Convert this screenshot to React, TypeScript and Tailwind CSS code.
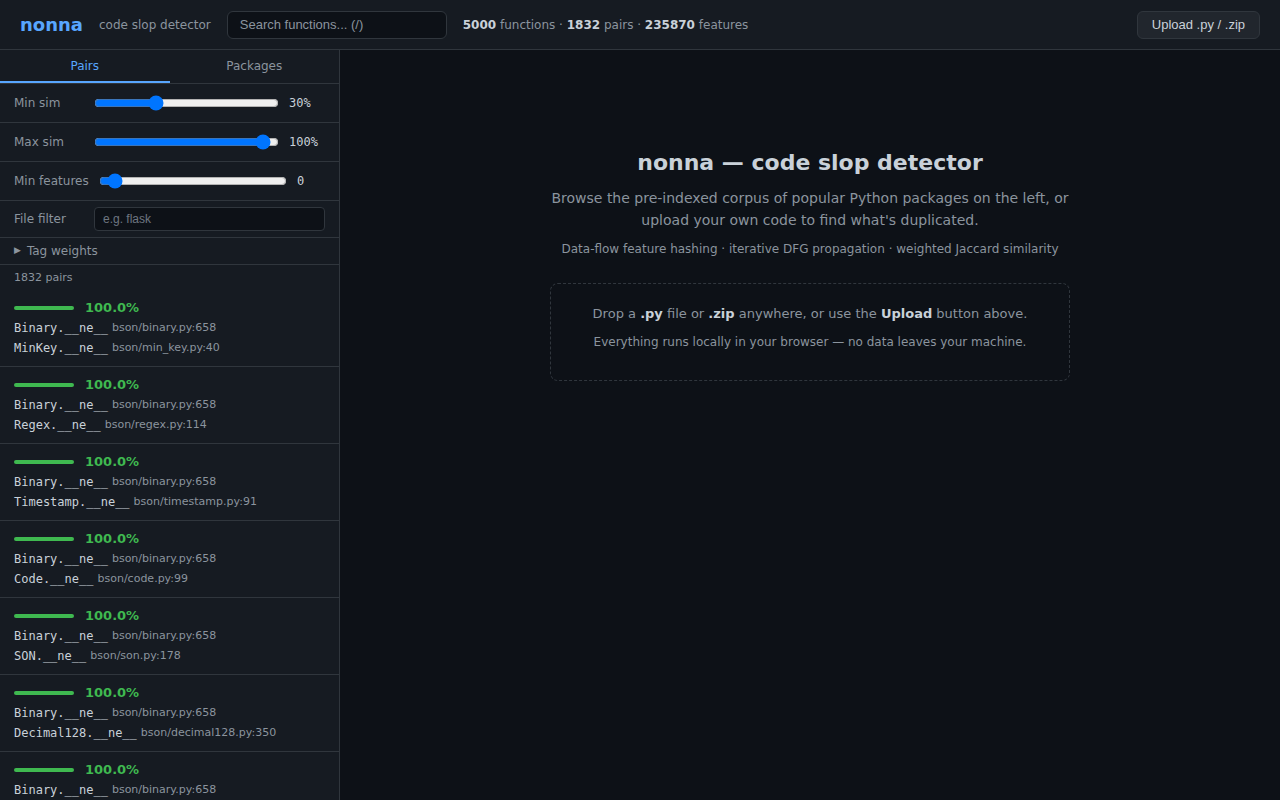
import React from 'react';

const sans = 'font-["DejaVu_Sans",sans-serif]';
const mono = 'font-["DejaVu_Sans_Mono",monospace]';
const ctrl = 'font-["Liberation_Sans",Arial,sans-serif]';

const pairs = [
  { a: 'Binary.__ne__', ap: 'bson/binary.py:658', b: 'MinKey.__ne__', bp: 'bson/min_key.py:40' },
  { a: 'Binary.__ne__', ap: 'bson/binary.py:658', b: 'Regex.__ne__', bp: 'bson/regex.py:114' },
  { a: 'Binary.__ne__', ap: 'bson/binary.py:658', b: 'Timestamp.__ne__', bp: 'bson/timestamp.py:91' },
  { a: 'Binary.__ne__', ap: 'bson/binary.py:658', b: 'Code.__ne__', bp: 'bson/code.py:99' },
  { a: 'Binary.__ne__', ap: 'bson/binary.py:658', b: 'SON.__ne__', bp: 'bson/son.py:178' },
  { a: 'Binary.__ne__', ap: 'bson/binary.py:658', b: 'Decimal128.__ne__', bp: 'bson/decimal128.py:350' },
  { a: 'Binary.__ne__', ap: 'bson/binary.py:658', b: 'MaxKey.__ne__', bp: 'bson/max_key.py:40' },
];

export default function App() {
  return (
    <div className={`flex h-screen flex-col overflow-hidden bg-[#0d1117] text-[#c9d1d9] ${sans}`}>
      {/* Header */}
      <header className="flex h-[50px] shrink-0 items-center gap-4 border-b border-[#30363d] bg-[#161b22] px-5">
        <span className="text-[18px] font-bold text-[#58a6ff]">nonna</span>
        <span className="text-[12px] text-[#8b949e]">code slop detector</span>
        <input
          placeholder="Search functions... (/)"
          className={`h-[28px] w-[220px] rounded-md border border-[#30363d] bg-[#0d1117] px-3 text-[13px] text-[#c9d1d9] outline-none placeholder:text-[#8b949e] ${ctrl}`}
        />
        <span className="text-[12px] text-[#8b949e]">
          <b className="text-[#c9d1d9]">5000</b> functions · <b className="text-[#c9d1d9]">1832</b> pairs ·{' '}
          <b className="text-[#c9d1d9]">235870</b> features
        </span>
        <button
          className={`ml-auto h-[28px] rounded-md border border-[#30363d] bg-[#21262d] px-[14px] text-[13px] text-[#c9d1d9] ${ctrl}`}
        >
          Upload .py / .zip
        </button>
      </header>

      <div className="flex min-h-0 flex-1">
        {/* Sidebar */}
        <aside className="flex w-[340px] shrink-0 flex-col overflow-hidden border-r border-[#30363d] bg-[#161b22]">
          <div className="flex h-[34px] shrink-0 border-b border-[#30363d] text-[12px]">
            <div className="flex flex-1 items-center justify-center border-b-2 border-[#58a6ff] pt-[1px] text-[#58a6ff]">Pairs</div>
            <div className="flex flex-1 items-center justify-center pb-[1px] text-[#8b949e]">Packages</div>
          </div>

          <SliderRow label="Min sim" value={32} display="30%" valueW="w-[36px]" />
          <SliderRow label="Max sim" value={95} display="100%" valueW="w-[36px]" />
          <SliderRow label="Min features" value={5} display="0" valueW="w-[28px]" />

          <div className="flex h-[37px] shrink-0 items-center gap-[10px] border-b border-[#30363d] px-[14px]">
            <span className="w-[70px] shrink-0 text-[12px] text-[#8b949e]">File filter</span>
            <input
              placeholder="e.g. flask"
              className={`h-[24px] min-w-0 flex-1 rounded border border-[#30363d] bg-[#0d1117] px-2 text-[12px] text-[#c9d1d9] outline-none placeholder:text-[#6e7681] ${ctrl}`}
            />
          </div>

          <div className="flex h-[27px] shrink-0 items-center gap-[6px] border-b border-[#30363d] px-[14px] text-[12px] text-[#8b949e]">
            <span className="text-[9px]">▶</span>
            <span>Tag weights</span>
          </div>

          <div className="flex h-[25px] shrink-0 items-center px-[14px] pt-[1px] text-[11px] text-[#8b949e]">1832 pairs</div>

          <div className="min-h-0 flex-1 overflow-hidden">
            {pairs.map((p, i) => (
              <div key={i} className="border-b border-[#30363d] px-[14px] pt-[10px] pb-[8px]">
                <div className="mb-[2px] flex h-[16px] items-center gap-[11px]">
                  <div className="h-[4px] w-[60px] rounded-full bg-[#3fb950]" />
                  <span className="text-[13px] font-bold text-[#3fb950]">100.0%</span>
                </div>
                <FnLine name={p.a} path={p.ap} />
                <FnLine name={p.b} path={p.bp} />
              </div>
            ))}
          </div>
        </aside>

        {/* Main */}
        <main className="flex min-w-0 flex-1 justify-center bg-[#0d1117] pt-[99px]">
          <div className="flex w-[520px] flex-col items-center text-center">
            <h1 className="text-[22px] font-bold leading-[28px] text-[#c9d1d9]">nonna — code slop detector</h1>
            <p className="mt-[10px] text-[14px] leading-[22px] text-[#8b949e]">
              Browse the pre-indexed corpus of popular Python packages on the left, or upload your own code to find what's duplicated.
            </p>
            <p className="mt-[10px] text-[12px] leading-[16px] text-[#8b949e]">
              Data-flow feature hashing · iterative DFG propagation · weighted Jaccard similarity
            </p>
            <div className="mt-[26px] flex h-[98px] w-full flex-col items-center rounded-lg border border-dashed border-[#30363d] pt-[20px] text-[13px] text-[#8b949e]">
              <p className="leading-[20px]">
                Drop a <b className="text-[#c9d1d9]">.py</b> file or <b className="text-[#c9d1d9]">.zip</b> anywhere, or use the{' '}
                <b className="text-[#c9d1d9]">Upload</b> button above.
              </p>
              <p className="mt-[9px] text-[12px] leading-[18px]">Everything runs locally in your browser — no data leaves your machine.</p>
            </div>
          </div>
        </main>
      </div>
    </div>
  );
}

function SliderRow({ label, value, display, valueW }: { label: string; value: number; display: string; valueW: string }) {
  return (
    <div className="flex h-[39px] shrink-0 items-center gap-[10px] border-b border-[#30363d] px-[14px]">
      <span className="min-w-[70px] shrink-0 text-[12px] text-[#8b949e]">{label}</span>
      <input type="range" min={0} max={100} defaultValue={value} className="m-0 min-w-0 flex-1" />
      <span className={`${valueW} shrink-0 text-[12px] text-[#c9d1d9] ${mono}`}>{display}</span>
    </div>
  );
}

function FnLine({ name, path }: { name: string; path: string }) {
  return (
    <div className="flex h-[20px] items-center gap-[4px] whitespace-nowrap">
      <span className={`text-[12px] text-[#c9d1d9] ${mono}`}>{name}</span>
      <span className="text-[11px] text-[#8b949e]">{path}</span>
    </div>
  );
}
